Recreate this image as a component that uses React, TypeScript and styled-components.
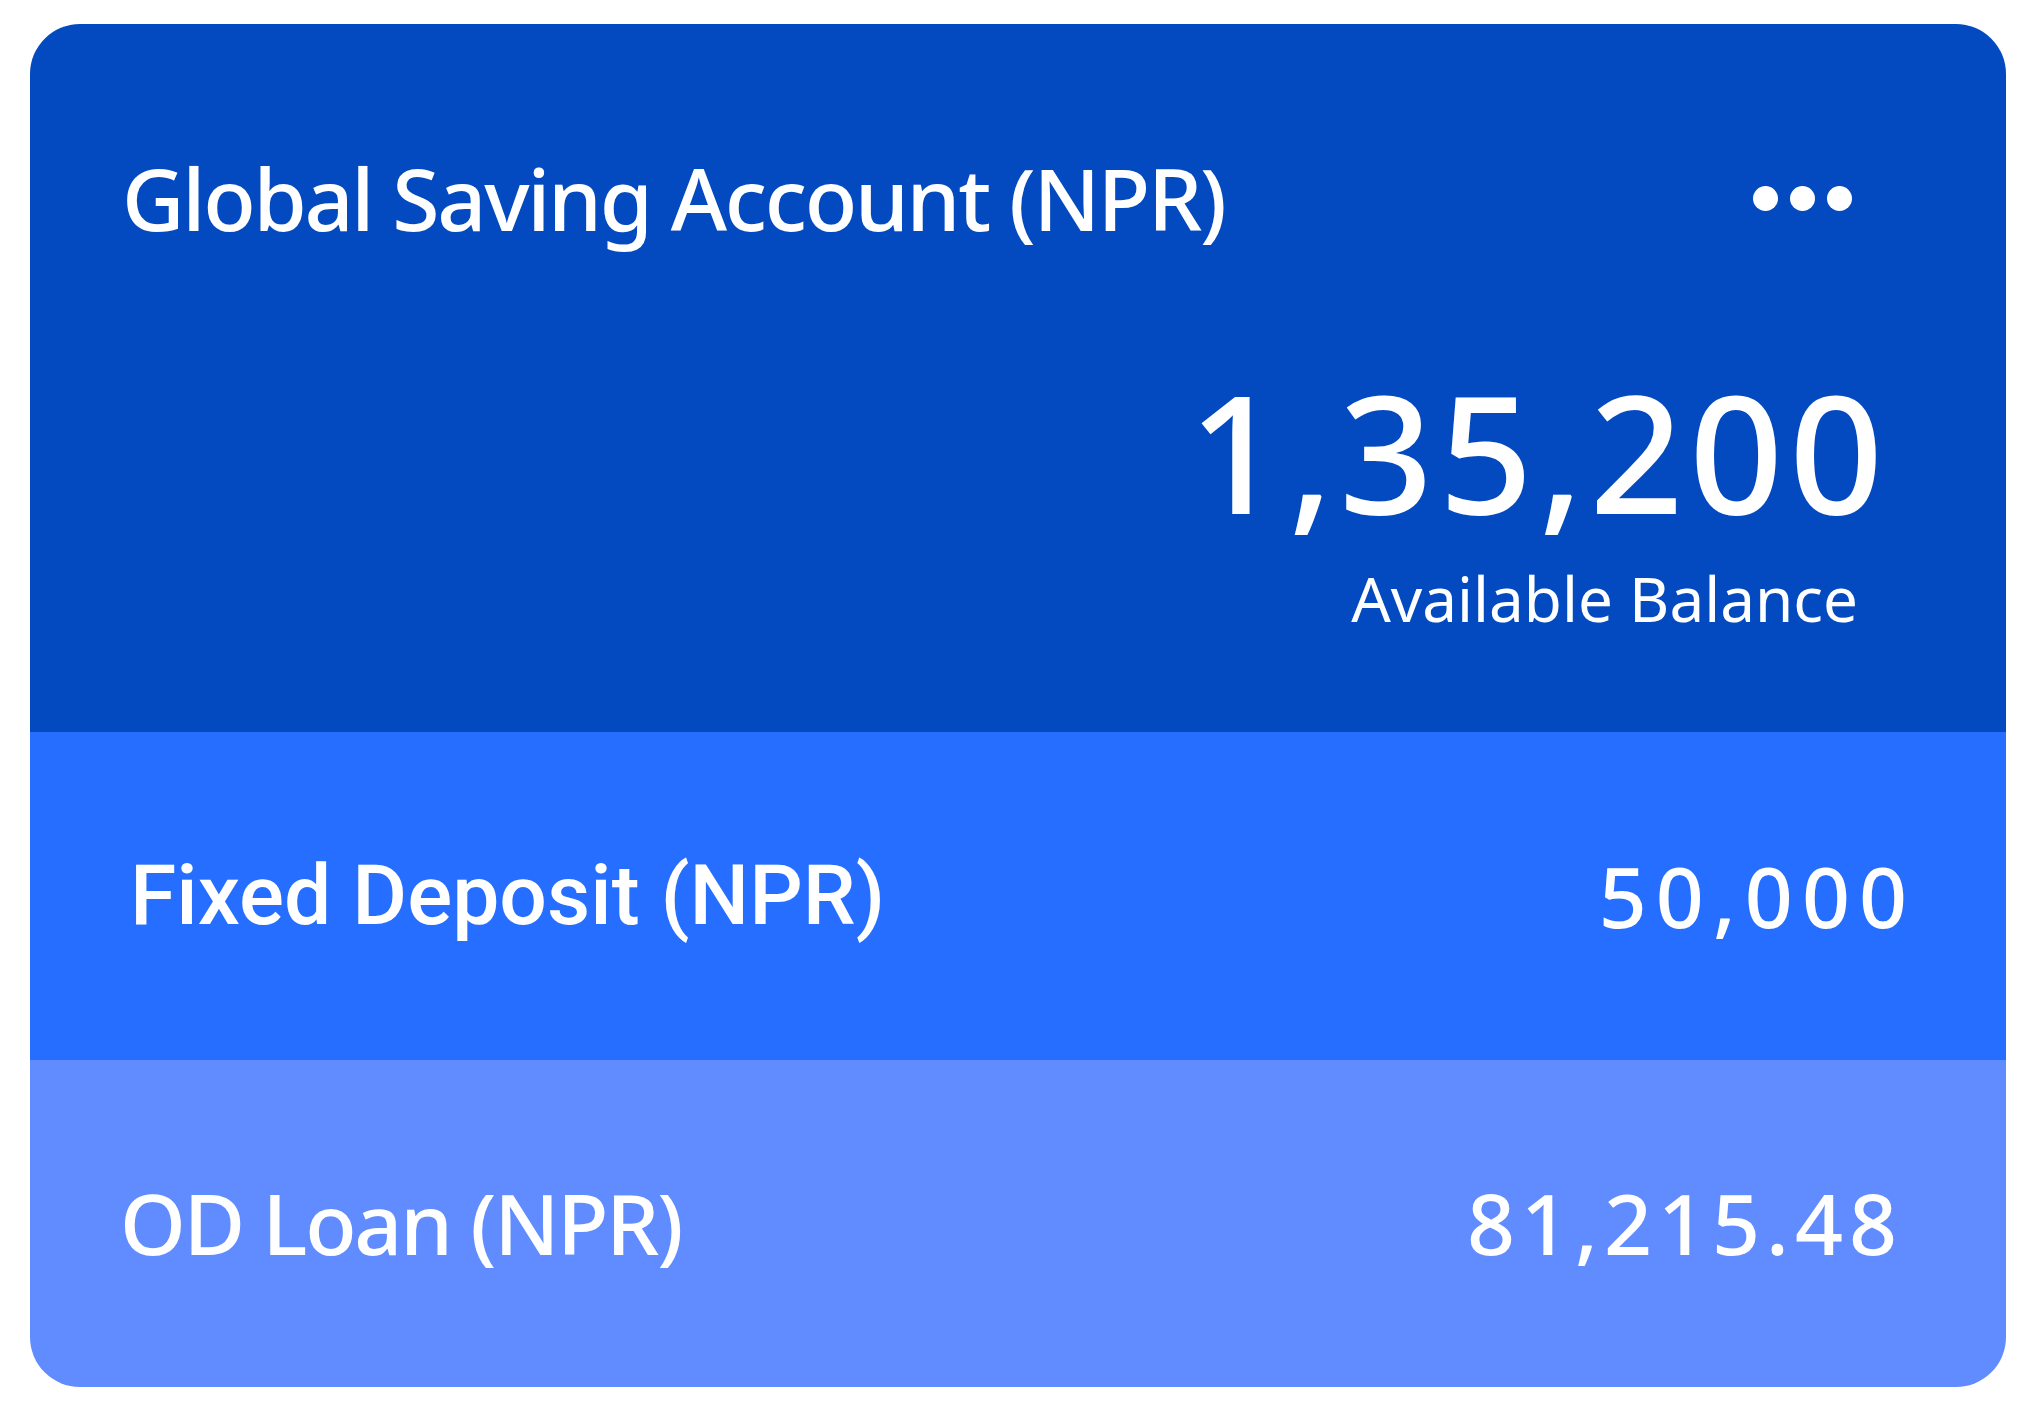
import React from 'react'
import styled, { createGlobalStyle } from 'styled-components'

const GlobalStyle = createGlobalStyle`
  html,
  body {
    margin: 0;
    padding: 0;
    background: #fff;
  }
`

const Page = styled.div`
  padding: 24px 0 0 30px;
`

const Card = styled.div`
  width: 1976px;
  height: 1363px;
  border-radius: 50px;
  overflow: hidden;
  display: flex;
  flex-direction: column;
  color: #fff;
  font-family: 'Noto Sans', 'Open Sans', sans-serif;
`

const Summary = styled.section`
  height: 708px;
  background: #034ac0;
  padding: 131px 154px 0 92px;
  box-sizing: border-box;
  display: flex;
  flex-direction: column;
`

const Header = styled.div`
  display: flex;
  justify-content: space-between;
  align-items: center;
`

const Title = styled.h1`
  margin: 0;
  font-size: 86px;
  font-weight: 500;
  line-height: 86px;
  letter-spacing: -2.3px;
`

const MoreButton = styled.button`
  display: flex;
  gap: 12px;
  padding: 0;
  border: 0;
  background: none;
  cursor: pointer;
`

const Dot = styled.span`
  width: 25px;
  height: 25px;
  border-radius: 50%;
  background: #fff;
`

const Balance = styled.div`
  display: flex;
  flex-direction: column;
  align-items: flex-end;
  margin: 129px -37px 0 0;
`

const Amount = styled.div`
  font-size: 164px;
  font-weight: 500;
  line-height: 162px;
  letter-spacing: 6px;
`

const Caption = styled.div`
  margin: 35px 31px 0 0;
  font-size: 62px;
  line-height: 62px;
`

const Row = styled.div<{ $bg: string; $left: number; $right: number }>`
  flex: 1;
  display: flex;
  justify-content: space-between;
  align-items: center;
  background: ${(p) => p.$bg};
  padding: 0 ${(p) => p.$right}px 0 ${(p) => p.$left}px;
`

const RowLabel = styled.span<{ $alt?: boolean }>`
  font-family: ${(p) => (p.$alt ? "Roboto, 'Noto Sans', sans-serif" : "'Noto Sans', sans-serif")};
  font-size: 84px;
  font-weight: 500;
  line-height: 1;
  letter-spacing: ${(p) => (p.$alt ? 0 : -2.2)}px;
`

const RowValue = styled.span<{ $spacing: number }>`
  font-size: 84px;
  font-weight: 500;
  line-height: 1;
  letter-spacing: ${(p) => p.$spacing}px;
`

const products = [
  { label: 'Fixed Deposit (NPR)', value: '50,000', bg: '#256eff', left: 100, right: 90, spacing: 9, alt: true },
  { label: 'OD Loan (NPR)', value: '81,215.48', bg: '#608cff', left: 90, right: 103, spacing: 6, alt: false },
]

export default function App() {
  return (
    <Page>
      <GlobalStyle />
      <Card>
        <Summary>
          <Header>
            <Title>Global Saving Account (NPR)</Title>
            <MoreButton aria-label="More options">
              <Dot />
              <Dot />
              <Dot />
            </MoreButton>
          </Header>
          <Balance>
            <Amount>1,35,200</Amount>
            <Caption>Available Balance</Caption>
          </Balance>
        </Summary>
        {products.map((item) => (
          <Row key={item.label} $bg={item.bg} $left={item.left} $right={item.right}>
            <RowLabel $alt={item.alt}>{item.label}</RowLabel>
            <RowValue $spacing={item.spacing}>{item.value}</RowValue>
          </Row>
        ))}
      </Card>
    </Page>
  )
}
